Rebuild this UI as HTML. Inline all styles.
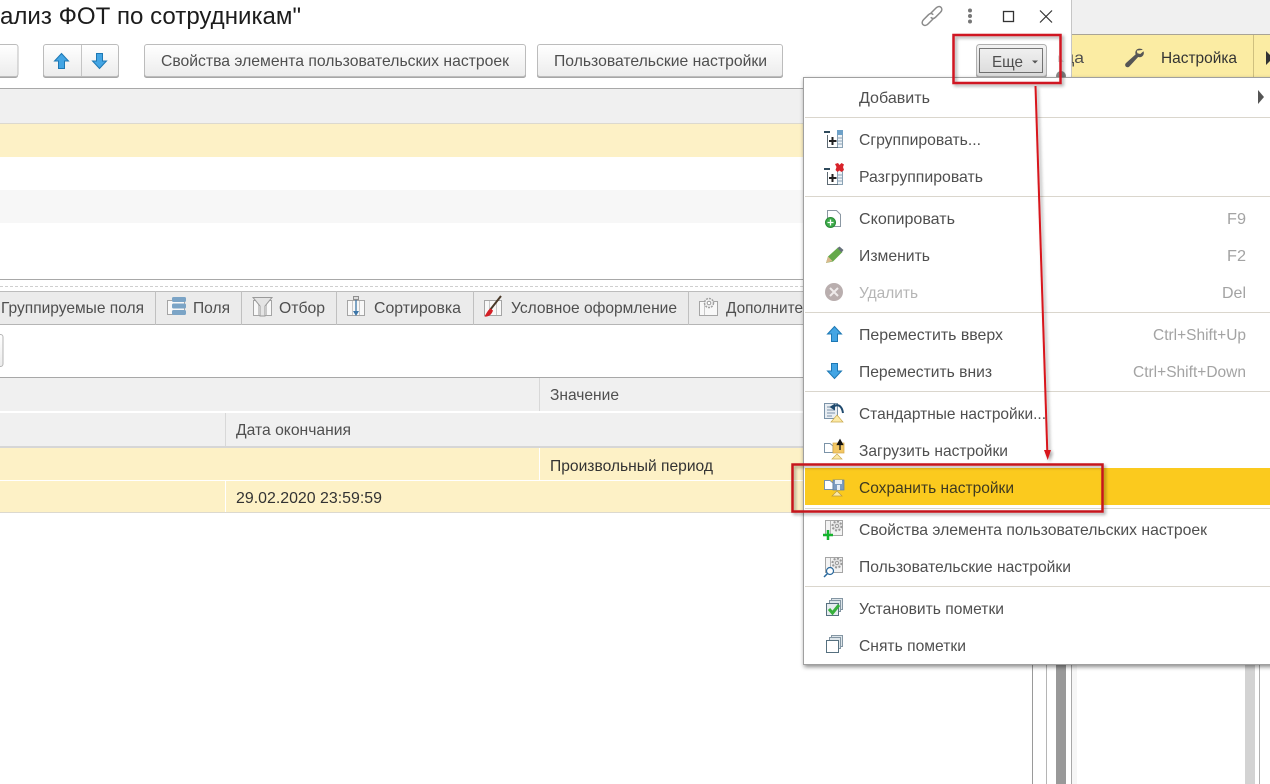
<!DOCTYPE html>
<html><head><meta charset="utf-8"><style>
html,body{margin:0;padding:0;background:#fff;width:1270px;height:784px;overflow:hidden}
svg{display:block;position:absolute;left:0;top:0}
text{font-family:"Liberation Sans",sans-serif;font-size:16px;fill:#4b4b4b}
.m{fill:#4f4f4f}.d{fill:#333}.s{fill:#a3a3a3}
</style></head><body>
<svg width="1270" height="784" viewBox="0 0 1270 784" xmlns="http://www.w3.org/2000/svg">
<defs>
<linearGradient id="b" x1="0" y1="0" x2="0" y2="1"><stop offset="0" stop-color="#fff"/><stop offset="1" stop-color="#ececec"/></linearGradient>
<linearGradient id="e" x1="0" y1="0" x2="0" y2="1"><stop offset="0" stop-color="#f3f3f3"/><stop offset="1" stop-color="#dadada"/></linearGradient>
<filter id="sh" x="-5%" y="-5%" width="110%" height="110%"><feDropShadow dx="1" dy="2" stdDeviation="2" flood-color="#000" flood-opacity=".45"/></filter>
<filter id="rs" x="-20%" y="-20%" width="140%" height="140%"><feDropShadow dx="2" dy="2" stdDeviation="1.5" flood-color="#000" flood-opacity=".35"/></filter>
<symbol id="up" viewBox="0 0 15 16" overflow="visible"><path d="M7.5 .5 14.5 8H10.5V15.5H4.5V8H.5Z" fill="#43a5e4" stroke="#1d78b4"/></symbol>
<symbol id="dn" viewBox="0 0 15 16" overflow="visible"><path d="M4.5 .5H10.5V8H14.5L7.5 15.5 .5 8H4.5Z" fill="#43a5e4" stroke="#1d78b4"/></symbol>
</defs>

<!-- background right side -->
<rect x="1071" y="0" width="199" height="34" fill="#f0f0f0"/>
<rect x="1071" y="34" width="199" height="1" fill="#a9a496"/>
<rect x="1071" y="35" width="199" height="42" fill="#fbeca3"/>
<text x="1064" y="63" textLength="20" lengthAdjust="spacingAndGlyphs" class="m">да</text>
<rect x="1047" y="35" width="24" height="42" fill="#fff"/>
<rect x="1071" y="0" width="1" height="77" fill="#c6c6c6"/>
<rect x="1253" y="35" width="1" height="42" fill="#cfc07f"/>
<g transform="translate(1134 58) scale(1.250) translate(-1134 -56.500)">
<path d="M1141 50c-1.500-1.500-4.500-1.200-5.500.6-.6 1.100-.5 2.200-.2 3l-7.800 7c-1.800 2 .9 4.500 2.800 2.700l7-7.600c1.600.5 3.200 0 4-1.300.7-1.100.7-2.300.3-3.300l-2.600 2.200-2.300-.6-.5-2.100z" fill="#555"/>
</g>
<text x="1161" y="63" textLength="76" lengthAdjust="spacingAndGlyphs" class="d">Настройка</text>
<path d="M1266 51V65L1273 58Z" fill="#333"/>
<!-- lower right chrome -->
<rect x="1032" y="660" width="1" height="124" fill="#9a9a9a"/>
<rect x="1046" y="660" width="1" height="124" fill="#b5b5b5"/>
<rect x="1056" y="660" width="10" height="124" fill="#999"/>
<rect x="1071" y="660" width="1" height="124" fill="#a8a8a8"/>
<rect x="1072" y="660" width="5" height="124" fill="#f6f6f6"/>
<rect x="1245" y="660" width="10" height="124" fill="#d3d3d3"/>
<rect x="1259" y="660" width="1" height="124" fill="#b0b0b0"/>

<!-- title -->
<text x="0" y="24" textLength="301" lengthAdjust="spacingAndGlyphs" style="font-size:24px;fill:#1c1c1c">ализ ФОТ по сотрудникам"</text>
<g fill="none" stroke="#8a8a8a" stroke-width="1.500" stroke-linecap="round">
<path d="M931 13 936 8c1.800-1.800 3.800-1.800 5-.6s1.200 3.200-.6 5l-4.800 4.800c-1.500 1.500-3.200 1.500-4.400.5"/>
<path d="M933 19 928 24c-1.800 1.800-3.800 1.800-5 .6s-1.200-3.200.6-5l4.800-4.800c1.500-1.500 3.200-1.500 4.400-.5"/>
</g>
<g fill="#777"><circle cx="970" cy="10.500" r="2"/><circle cx="970" cy="16" r="2"/><circle cx="970" cy="21.500" r="2"/></g>
<rect x="1003.500" y="11.500" width="10" height="10" fill="none" stroke="#333" stroke-width="1.300"/>
<path d="M1040 10.500 1052 22.500M1052 10.500 1040 22.500" stroke="#333" stroke-width="1.200" fill="none"/>

<!-- toolbar -->
<g fill="#a6a6a6">
<rect x="-6" y="46" width="24" height="32" rx="2.500"/>
<rect x="43" y="46" width="76" height="32" rx="2.500"/>
<rect x="144" y="46" width="382" height="32" rx="2.500"/>
<rect x="537" y="46" width="246" height="32" rx="2.500"/>
</g>
<g stroke="#bcbcbc" fill="url(#b)">
<rect x="-6" y="44.500" width="24" height="32" rx="2.500"/>
<rect x="43.500" y="44.500" width="75" height="32" rx="2.500"/>
<rect x="144.500" y="44.500" width="381" height="32" rx="2.500"/>
<rect x="537.500" y="44.500" width="245" height="32" rx="2.500"/>
</g>
<rect x="81" y="45" width="1" height="31" fill="#c4c4c4"/>
<use href="#up" x="54" y="53" width="15" height="16"/>
<use href="#dn" x="92" y="53" width="15" height="16"/>
<text x="161" y="66" textLength="348" lengthAdjust="spacingAndGlyphs" class="m">Свойства элемента пользовательских настроек</text>
<text x="554" y="66" textLength="213" lengthAdjust="spacingAndGlyphs" class="m">Пользовательские настройки</text>

<!-- upper list -->
<rect x="0" y="88" width="803" height="1" fill="#a8a8a8"/>
<rect x="0" y="89" width="803" height="34" fill="#f0f0f0"/>
<rect x="0" y="123" width="803" height="1" fill="#dcd9cf"/>
<rect x="0" y="124" width="803" height="33" fill="#fdf1c6"/>
<rect x="0" y="190" width="803" height="33" fill="#f7f7f7"/>
<rect x="0" y="279" width="803" height="1" fill="#a8a8a8"/>
<path d="M0 286.500H803" stroke="#cfcfcf" stroke-dasharray="3 2" fill="none"/>

<!-- tabs -->
<rect x="0" y="291" width="803" height="34" fill="#ebebeb"/>
<rect x="0" y="291" width="803" height="1" fill="#bcbcbc"/>
<rect x="0" y="324" width="803" height="1" fill="#b5b5b5"/>
<g fill="#c0c0c0"><rect x="155" y="291" width="1" height="34"/><rect x="241" y="291" width="1" height="34"/><rect x="336" y="291" width="1" height="34"/><rect x="473" y="291" width="1" height="34"/><rect x="688" y="291" width="1" height="34"/></g>
<text x="1" y="313" textLength="143" lengthAdjust="spacingAndGlyphs" class="m">Группируемые поля</text>
<text x="193" y="313" textLength="37" lengthAdjust="spacingAndGlyphs" class="m">Поля</text>
<text x="279" y="313" textLength="46" lengthAdjust="spacingAndGlyphs" class="m">Отбор</text>
<text x="374" y="313" textLength="87" lengthAdjust="spacingAndGlyphs" class="m">Сортировка</text>
<text x="511" y="313" textLength="166" lengthAdjust="spacingAndGlyphs" class="m">Условное оформление</text>
<text x="726" y="313" textLength="77" lengthAdjust="spacingAndGlyphs" class="m">Дополните</text>
<!-- tab icons -->
<g fill="#f8f8f8" stroke="#a5a5a5">
<rect x="167.500" y="300.500" width="17" height="14"/>
<rect x="253.500" y="300.500" width="18" height="15"/>
<rect x="347.500" y="300.500" width="17" height="15"/>
<rect x="484.500" y="300.500" width="17" height="15"/>
<rect x="699.500" y="301.500" width="18" height="14"/>
</g>
<path d="M258.500 301V315M266.500 301V315M352.500 301V315M359.500 301V315M489.500 301V315M496.500 301V315M704.500 302V315" stroke="#c8c8c8"/>
<g fill="#7ba4c6"><rect x="172" y="297" width="14" height="5" rx="1.500"/><rect x="172" y="303.500" width="14" height="5" rx="1.500"/><rect x="172" y="310" width="14" height="5" rx="1.500"/></g>
<path d="M253 297.500H272L265 306V316H260V306Z" fill="#e4e4e4" stroke="#9a9a9a"/>
<path d="M356 299V313" stroke="#3d76a8" stroke-width="1.300"/><path d="M353 311H359L356 316Z" fill="#3d76a8"/>
<rect x="353.500" y="296.500" width="5" height="3" fill="#ddd" stroke="#8f8f8f"/>
<path d="M501 296 490 310" stroke="#4a3a2a" stroke-width="2"/>
<path d="M490.500 308.500c-2 1-3 3-6 8 3 .5 7-1 8.500-6Z" fill="#d42027"/>
<circle cx="709" cy="303" r="4.500" fill="#f3f3f3" stroke="#a0a0a0" stroke-width="1.500" stroke-dasharray="2 1"/><circle cx="709" cy="303" r="1.800" fill="#fff" stroke="#999"/>

<rect x="-6" y="334.500" width="9" height="32" rx="2.500" fill="url(#b)" stroke="#b4b4b4"/>

<!-- lower table -->
<rect x="0" y="377" width="803" height="1" fill="#a8a8a8"/>
<rect x="0" y="378" width="803" height="33" fill="#f0f0f0"/>
<rect x="0" y="411" width="803" height="2" fill="#fff"/>
<rect x="0" y="413" width="803" height="33" fill="#f0f0f0"/>
<rect x="0" y="446" width="803" height="2" fill="#d6d6d6"/>
<rect x="0" y="448" width="803" height="32" fill="#fdf1c6"/>
<rect x="0" y="480" width="803" height="1" fill="#fff"/>
<rect x="0" y="481" width="803" height="31" fill="#fdf1c6"/>
<rect x="0" y="512" width="803" height="1" fill="#dcd9cf"/>
<rect x="539" y="378" width="1" height="33" fill="#d8d8d8"/>
<rect x="539" y="448" width="1" height="32" fill="#fff"/>
<rect x="225" y="413" width="1" height="33" fill="#d8d8d8"/>
<rect x="225" y="481" width="1" height="31" fill="#fff"/>
<text x="550" y="400" textLength="69" lengthAdjust="spacingAndGlyphs" class="m">Значение</text>
<text x="236" y="435" textLength="115" lengthAdjust="spacingAndGlyphs" class="m">Дата окончания</text>
<text x="550" y="471" textLength="163" lengthAdjust="spacingAndGlyphs" class="d">Произвольный период</text>
<text x="236" y="503" textLength="146" lengthAdjust="spacingAndGlyphs" class="d">29.02.2020 23:59:59</text>

<!-- Еще button -->
<path d="M1058 55 1064 62H1058Z" fill="#ddd"/>
<circle cx="1061" cy="76" r="5" fill="#888"/>
<rect x="976" y="46" width="71" height="32" rx="3" fill="#a0a0a0"/>
<rect x="976.500" y="44.500" width="70" height="32" rx="3" fill="url(#e)" stroke="#b0b0b0"/>
<rect x="979.500" y="48.500" width="63" height="24" fill="none" stroke="#000" stroke-dasharray="1 1"/>
<text x="992" y="67" textLength="31" lengthAdjust="spacingAndGlyphs" class="m">Еще</text>
<path d="M1032 60.500H1038L1035 63.500Z" fill="#555"/>

<!-- menu -->
<rect x="803.500" y="77.500" width="480" height="587" fill="#fff" stroke="#a0a0a0" filter="url(#sh)"/>
<g fill="#dad6cd">
<rect x="805" y="117" width="465" height="1"/>
<rect x="805" y="196" width="465" height="1"/>
<rect x="805" y="312" width="465" height="1"/>
<rect x="805" y="391" width="465" height="1"/>
<rect x="805" y="508" width="465" height="1"/>
<rect x="805" y="586" width="465" height="1"/>
</g>
<rect x="805" y="468" width="465" height="37" fill="#fbca1e"/>
<path d="M1258 90 1264 97 1258 104Z" fill="#555"/>

<text x="859" y="103" textLength="71" lengthAdjust="spacingAndGlyphs" class="m">Добавить</text>
<text x="859" y="145" textLength="122" lengthAdjust="spacingAndGlyphs" class="m">Сгруппировать...</text>
<text x="859" y="182" textLength="124" lengthAdjust="spacingAndGlyphs" class="m">Разгруппировать</text>
<text x="859" y="224" textLength="96" lengthAdjust="spacingAndGlyphs" class="m">Скопировать</text>
<text x="859" y="261" textLength="71" lengthAdjust="spacingAndGlyphs" class="m">Изменить</text>
<text x="859" y="298" textLength="59" lengthAdjust="spacingAndGlyphs" style="fill:#b5b5b5">Удалить</text>
<text x="859" y="340" textLength="144" lengthAdjust="spacingAndGlyphs" class="m">Переместить вверх</text>
<text x="859" y="377" textLength="133" lengthAdjust="spacingAndGlyphs" class="m">Переместить вниз</text>
<text x="859" y="419" textLength="187" lengthAdjust="spacingAndGlyphs" class="m">Стандартные настройки...</text>
<text x="859" y="456" textLength="149" lengthAdjust="spacingAndGlyphs" class="m">Загрузить настройки</text>
<text x="859" y="493" textLength="155" lengthAdjust="spacingAndGlyphs" style="fill:#3f3a20">Сохранить настройки</text>
<text x="859" y="535" textLength="348" lengthAdjust="spacingAndGlyphs" class="m">Свойства элемента пользовательских настроек</text>
<text x="859" y="572" textLength="212" lengthAdjust="spacingAndGlyphs" class="m">Пользовательские настройки</text>
<text x="859" y="614" textLength="145" lengthAdjust="spacingAndGlyphs" class="m">Установить пометки</text>
<text x="859" y="651" textLength="107" lengthAdjust="spacingAndGlyphs" class="m">Снять пометки</text>
<text x="1227" y="224" textLength="19" lengthAdjust="spacingAndGlyphs" class="s">F9</text>
<text x="1227" y="261" textLength="19" lengthAdjust="spacingAndGlyphs" class="s">F2</text>
<text x="1222" y="298" textLength="24" lengthAdjust="spacingAndGlyphs" class="s">Del</text>
<text x="1153" y="340" textLength="93" lengthAdjust="spacingAndGlyphs" class="s">Ctrl+Shift+Up</text>
<text x="1133" y="377" textLength="113" lengthAdjust="spacingAndGlyphs" class="s">Ctrl+Shift+Down</text>

<!-- menu icons -->
<rect x="824" y="131" width="6" height="2" fill="#2f4a5c"/>
<rect x="837.500" y="130.500" width="5" height="17" fill="#eef3f7" stroke="#8aa2b4"/>
<rect x="837" y="130" width="6" height="5" fill="#6ea1c8"/>
<path d="M827.500 135V147.500H838" fill="none" stroke="#5d6a73"/>
<path d="M829 141H836.500M832.500 137V145" stroke="#222" stroke-width="2"/>
<path d="M838 138H842M838 141H842M838 144H842" stroke="#8aa2b4"/>
<g transform="translate(0 37)">
<rect x="824" y="131" width="6" height="2" fill="#2f4a5c"/>
<rect x="837.500" y="130.500" width="5" height="17" fill="#eef3f7" stroke="#8aa2b4"/>
<path d="M827.500 135V147.500H838" fill="none" stroke="#5d6a73"/>
<path d="M829 141H836.500M832.500 137V145" stroke="#222" stroke-width="2"/>
<path d="M838 138H842M838 141H842M838 144H842" stroke="#8aa2b4"/>
<path d="M835 127 838 126 839.500 128 841.500 126 844 127.500 843 130 844 133 841.500 135 839.500 133.500 837.500 135 835.500 133 836.500 130Z" fill="#d8232a"/>
</g>
<!-- copy -->
<path d="M827.500 210.500H836.500L840.500 214.500V226.500H827.500Z" fill="#fff" stroke="#8b98a3"/>
<circle cx="830.500" cy="222.500" r="5" fill="#3dab4a" stroke="#2a8a36"/>
<path d="M827.500 222.500H833.500M830.500 219.500V225.500" stroke="#fff" stroke-width="1.300"/>
<!-- pencil -->
<path d="M826 263 828 256.500 838 247.500 842.500 252 833 261.500Z" fill="#64a94a"/>
<path d="M837.500 248 839.500 246.500 843.500 250 841.500 252.500Z" fill="#66707a"/>
<path d="M826 263 828 256.500 832.500 261Z" fill="#d9b98c"/>
<!-- delete -->
<circle cx="834" cy="292" r="9" fill="#b9aeae"/>
<path d="M830 288 838 296M838 288 830 296" stroke="#efebeb" stroke-width="2"/>
<!-- arrows -->
<use href="#up" x="827" y="326" width="15" height="16"/>
<use href="#dn" x="827" y="363" width="15" height="16"/>
<!-- standard settings -->
<rect x="824.500" y="403.500" width="13" height="15" fill="#e9eef3" stroke="#7b93a8"/>
<path d="M827 407H835M827 410H835M827 413H835M827 416H832" stroke="#7b93a8"/>
<path d="M833 407C838 403 842 406 843 413" fill="none" stroke="#1f4a6e" stroke-width="2"/>
<path d="M829.500 407 835 403.500 835 410.500Z" fill="#1f4a6e"/>
<path d="M837 415 843 422H831Z" fill="#fce9a5" stroke="#c9a94e" stroke-width=".7"/>
<!-- load -->
<path d="M824.500 443.500H830L833 446V452.500H824.500Z" fill="#fff" stroke="#7b93a8"/>
<rect x="833" y="443" width="11" height="10" fill="#f3c764" stroke="#d4a648" stroke-width=".7"/>
<path d="M840 450V442M837.500 444.500 840 440 842.500 444.500Z" stroke="#111" stroke-width="1.300" fill="#111"/>
<path d="M837 454 842 459H832Z" fill="#fce9a5" stroke="#c9a94e" stroke-width=".7"/>
<!-- save -->
<path d="M824.500 480.500H830L833 483V489.500H824.500Z" fill="#fff" stroke="#7b93a8"/>
<rect x="833" y="480" width="11" height="10" fill="#7d9cc0" stroke="#5d7ea6" stroke-width=".7"/>
<rect x="835" y="480" width="7" height="4" fill="#e6edf5"/><rect x="837" y="485" width="3" height="5" fill="#e6edf5"/>
<path d="M837 491 842 496H832Z" fill="#fce9a5" stroke="#b8983e" stroke-width=".7"/>
<!-- props -->
<rect x="825.500" y="520.500" width="17" height="15" fill="#f3f3f3" stroke="#a5a5a5"/>
<path d="M830.500 521V535" stroke="#b5b5b5"/>
<circle cx="837" cy="526" r="4.500" fill="#e2e2e2" stroke="#999" stroke-width="2" stroke-dasharray="2 1.500"/><circle cx="837" cy="526" r="1.500" fill="#fff" stroke="#999"/>
<path d="M823 535H833M828 530V540" stroke="#14b42c" stroke-width="2.500"/>
<rect x="825.500" y="557.500" width="17" height="15" fill="#f3f3f3" stroke="#a5a5a5"/>
<path d="M830.500 558V572" stroke="#b5b5b5"/>
<circle cx="837" cy="563" r="4.500" fill="#e2e2e2" stroke="#999" stroke-width="2" stroke-dasharray="2 1.500"/><circle cx="837" cy="563" r="1.500" fill="#fff" stroke="#999"/>
<circle cx="830" cy="571" r="3.500" fill="#fff" stroke="#2b6a9e" stroke-width="1.200"/>
<path d="M827.500 573.500 824 577" stroke="#2b6a9e" stroke-width="1.500"/>
<!-- checks -->
<rect x="831.500" y="598.500" width="11" height="11" fill="#dde5ea" stroke="#8496a3"/>
<rect x="829.500" y="600.500" width="11" height="11" fill="#dde5ea" stroke="#8496a3"/>
<rect x="826.500" y="603.500" width="12" height="12" fill="#e6ecef" stroke="#56707f"/>
<path d="M829 609 832.500 613 839 605" fill="none" stroke="#37b03c" stroke-width="3"/>
<rect x="831.500" y="635.500" width="11" height="11" fill="#dde5ea" stroke="#8496a3"/>
<rect x="829.500" y="637.500" width="11" height="11" fill="#dde5ea" stroke="#8496a3"/>
<rect x="826.500" y="640.500" width="12" height="12" fill="#fff" stroke="#56707f"/>

<!-- annotations -->
<rect x="953.500" y="35" width="107" height="48" fill="none" stroke="#d01820" stroke-width="2.500" filter="url(#rs)"/>
<rect x="792.500" y="464.500" width="310" height="47" fill="none" stroke="#c5161f" stroke-width="2.500" filter="url(#rs)"/>
<g filter="url(#rs)">
<path d="M1035.500 86 1047.300 452" stroke="#d8141c" stroke-width="2" fill="none"/>
<path d="M1044 450 1051 450 1047.700 460Z" fill="#d8141c"/>
</g>
</svg>
</body></html>
